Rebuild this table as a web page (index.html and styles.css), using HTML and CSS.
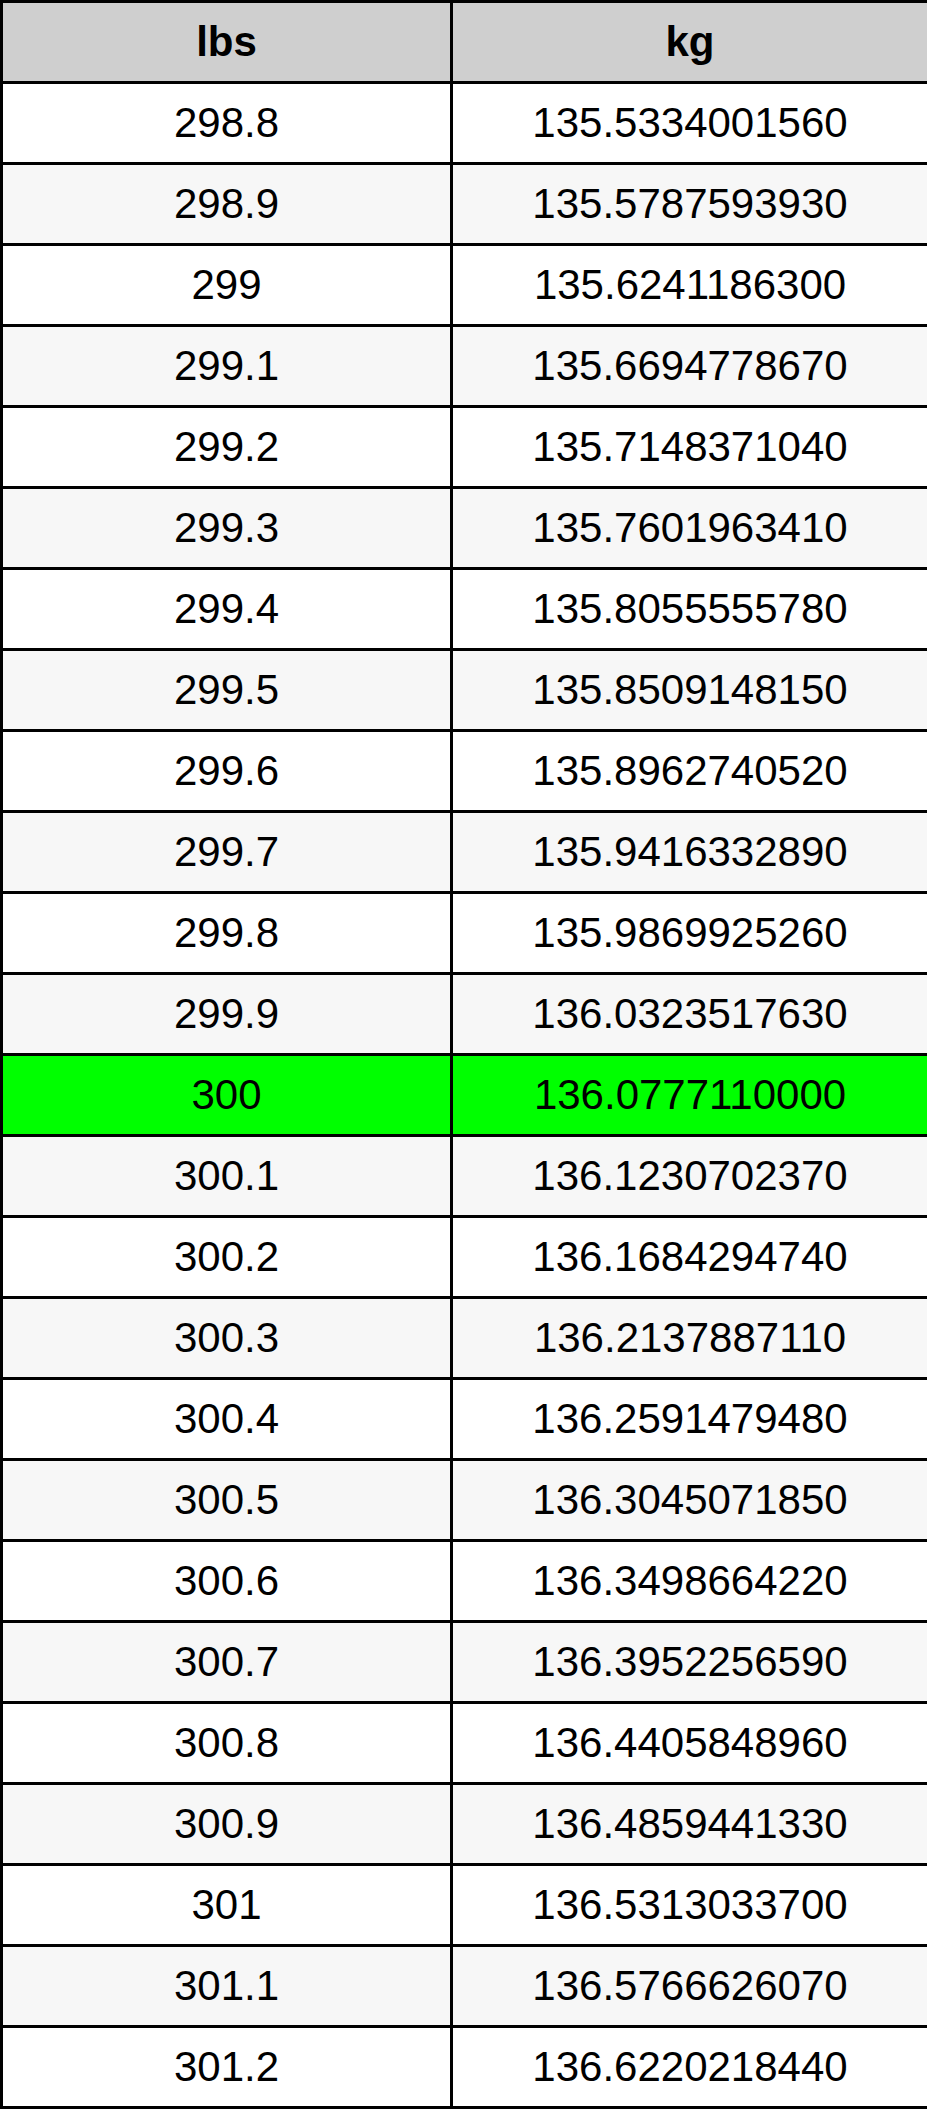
FILE: index.html
```html
<!DOCTYPE html>
<html>
<head>
<meta charset="utf-8">
<link rel="stylesheet" href="styles.css">
</head>
<body>
<div class="table">
  <div class="cell head">lbs</div><div class="cell head">kg</div>
  <div class="cell">298.8</div><div class="cell">135.5334001560</div>
  <div class="cell alt">298.9</div><div class="cell alt">135.5787593930</div>
  <div class="cell">299</div><div class="cell">135.6241186300</div>
  <div class="cell alt">299.1</div><div class="cell alt">135.6694778670</div>
  <div class="cell">299.2</div><div class="cell">135.7148371040</div>
  <div class="cell alt">299.3</div><div class="cell alt">135.7601963410</div>
  <div class="cell">299.4</div><div class="cell">135.8055555780</div>
  <div class="cell alt">299.5</div><div class="cell alt">135.8509148150</div>
  <div class="cell">299.6</div><div class="cell">135.8962740520</div>
  <div class="cell alt">299.7</div><div class="cell alt">135.9416332890</div>
  <div class="cell">299.8</div><div class="cell">135.9869925260</div>
  <div class="cell alt">299.9</div><div class="cell alt">136.0323517630</div>
  <div class="cell hl">300</div><div class="cell hl">136.0777110000</div>
  <div class="cell alt">300.1</div><div class="cell alt">136.1230702370</div>
  <div class="cell">300.2</div><div class="cell">136.1684294740</div>
  <div class="cell alt">300.3</div><div class="cell alt">136.2137887110</div>
  <div class="cell">300.4</div><div class="cell">136.2591479480</div>
  <div class="cell alt">300.5</div><div class="cell alt">136.3045071850</div>
  <div class="cell">300.6</div><div class="cell">136.3498664220</div>
  <div class="cell alt">300.7</div><div class="cell alt">136.3952256590</div>
  <div class="cell">300.8</div><div class="cell">136.4405848960</div>
  <div class="cell alt">300.9</div><div class="cell alt">136.4859441330</div>
  <div class="cell">301</div><div class="cell">136.5313033700</div>
  <div class="cell alt">301.1</div><div class="cell alt">136.5766626070</div>
  <div class="cell">301.2</div><div class="cell">136.6220218440</div>
</div>
</body>
</html>
```

FILE: styles.css
```css
html, body {
  margin: 0;
  padding: 0;
  background: #ffffff;
}

.table {
  display: grid;
  grid-template-columns: 447px 474px;
  grid-auto-rows: 78px;
  gap: 3px;
  padding: 3px;
  width: 921px;
  background: #000000;
  font-family: "Liberation Sans", Arial, sans-serif;
  font-size: 42px;
  color: #000000;
}

.cell {
  display: flex;
  align-items: center;
  justify-content: center;
  background: #ffffff;
}

.cell.alt {
  background: #f7f7f7;
}

.cell.head {
  background: #cfcfcf;
  font-weight: bold;
}

.cell.hl {
  background: #00ff00;
}
```
